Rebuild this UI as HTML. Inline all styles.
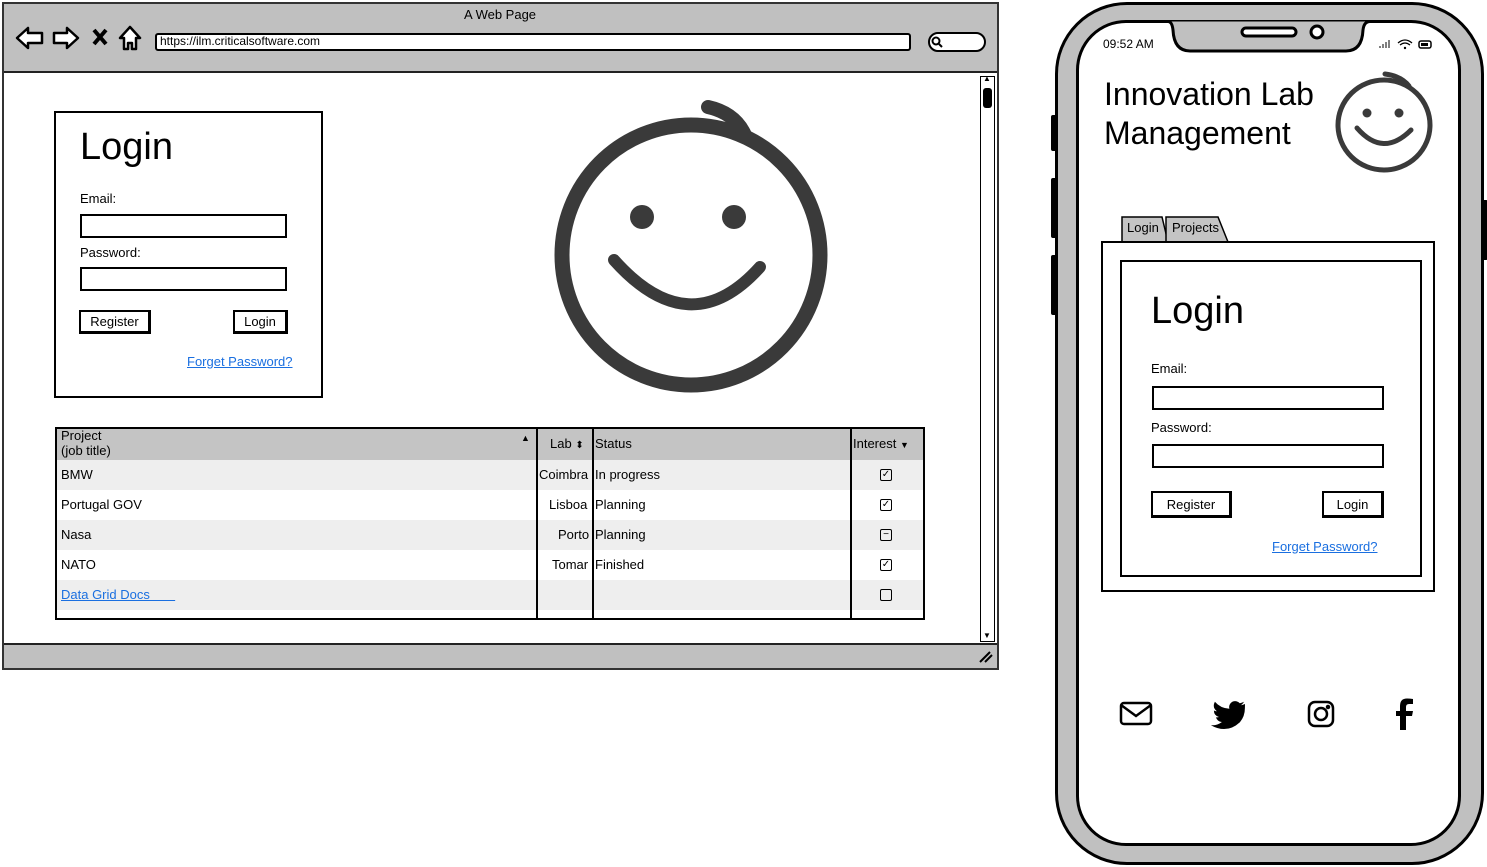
<!DOCTYPE html>
<html><head><meta charset="utf-8"><style>
*{margin:0;padding:0;box-sizing:border-box}
body{width:1487px;height:867px;background:#fff;font-family:"Liberation Sans",sans-serif;color:#000;position:relative;overflow:hidden}
.a{position:absolute}
.inp{position:absolute;border:2px solid #000;background:#fff}
.btn{position:absolute;border:2px solid #000;border-right-width:3px;border-bottom-width:3px;background:#fff;font-size:13px;text-align:center;line-height:20px}
.lnk{position:absolute;color:#1a6fe0;text-decoration:underline;font-size:13px}
.t{position:absolute;font-size:13px}
.cb{position:absolute;width:12px;height:12px;border:1.5px solid #000;border-radius:2px;font-size:10px;line-height:9px;text-align:center}
</style></head><body>
<!-- browser -->
<div class="a" style="left:2px;top:2px;width:997px;height:668px;border:2px solid #333;background:#fff"></div>
<div class="a" style="left:4px;top:4px;width:993px;height:69px;background:#c0c0c0;border-bottom:2px solid #222"></div>
<div class="t" style="left:464px;top:7px">A Web Page</div>
<svg class="a" style="left:14px;top:24px" width="130" height="28" viewBox="0 0 130 28" fill="#fff" stroke="#000" stroke-width="2.5" stroke-linejoin="round">
<path d="M3 14 L14 4 L14 9 L28 9 L28 19 L14 19 L14 24 Z"/>
<path d="M64 14 L53 4 L53 9 L40 9 L40 19 L53 19 L53 24 Z"/>
<path d="M80 6 L92 20 M92 6 L80 20" stroke-width="4"/>
<path d="M106 14 L116 3 L126 14 L122 14 L122 25 L118 25 L118 19 L114 19 L114 25 L110 25 L110 14 Z"/>
</svg>
<div class="a" style="left:155px;top:33px;width:756px;height:18px;border:2px solid #000;border-radius:3px;background:#fff"></div>
<div class="t" style="left:160px;top:34px;font-size:12px">https://ilm.criticalsoftware.com</div>
<div class="a" style="left:928px;top:32px;width:58px;height:20px;border:2px solid #000;border-radius:10px;background:#fff"></div>
<svg class="a" style="left:931px;top:36px" width="14" height="12"><circle cx="5" cy="5" r="3.5" fill="none" stroke="#000" stroke-width="2"/><path d="M8 8 L11 11" stroke="#000" stroke-width="2"/></svg>
<div class="a" style="left:4px;top:643px;width:993px;height:25px;background:#c0c0c0;border-top:2px solid #222"></div>
<div class="a" style="left:980px;top:76px;width:15px;height:566px;border:1.5px solid #000;background:#fff"></div>
<div class="a" style="left:983px;top:88px;width:9px;height:20px;background:#000;border-radius:3px"></div>
<div class="t" style="left:983px;top:74px;font-size:8px">▲</div>
<div class="t" style="left:983px;top:631px;font-size:8px">▼</div>
<svg class="a" style="left:978px;top:650px" width="16" height="14"><path d="M2 12 L12 2 M7 12 L14 5" stroke="#000" stroke-width="2"/></svg>
<!-- login card -->
<div class="a" style="left:54px;top:111px;width:269px;height:287px;border:2px solid #000"></div>
<div class="t" style="left:80px;top:126px;font-size:38px">Login</div>
<div class="t" style="left:80px;top:191px">Email:</div>
<div class="inp" style="left:80px;top:214px;width:207px;height:24px"></div>
<div class="t" style="left:80px;top:245px">Password:</div>
<div class="inp" style="left:80px;top:267px;width:207px;height:24px"></div>
<div class="btn" style="left:79px;top:310px;width:72px;height:24px">Register</div>
<div class="btn" style="left:233px;top:310px;width:55px;height:24px">Login</div>
<div class="lnk" style="left:187px;top:354px">Forget Password?</div>
<!-- big smiley -->
<svg class="a" style="left:550px;top:95px" width="285" height="300" viewBox="0 0 285 300" fill="none" stroke="#3a3a3a" stroke-linecap="round">
<ellipse cx="141" cy="160" rx="129" ry="130" stroke-width="15"/>
<path d="M158 12 Q185 18 195 40" stroke-width="14"/>
<circle cx="92" cy="122" r="12" fill="#3a3a3a" stroke="none"/>
<circle cx="184" cy="122" r="12" fill="#3a3a3a" stroke="none"/>
<path d="M64 165 Q140 250 210 172" stroke-width="12"/>
</svg>
<!-- table -->
<div class="a" style="left:55px;top:427px;width:870px;height:193px;border:2px solid #000;background:#fff"></div>
<div class="a" style="left:57px;top:429px;width:866px;height:31px;background:#c4c4c4"></div>
<div class="a" style="left:57px;top:460px;width:866px;height:30px;background:#eee"></div>
<div class="a" style="left:57px;top:520px;width:866px;height:30px;background:#eee"></div>
<div class="a" style="left:57px;top:580px;width:866px;height:30px;background:#eee"></div>
<div class="a" style="left:536px;top:429px;width:2px;height:190px;background:#000"></div>
<div class="a" style="left:592px;top:429px;width:2px;height:190px;background:#000"></div>
<div class="a" style="left:850px;top:429px;width:2px;height:190px;background:#000"></div>
<div class="t" style="left:61px;top:428px;line-height:15px">Project<br>(job title)</div>
<div class="t" style="left:521px;top:433px;font-size:9px">▲</div>
<div class="t" style="left:550px;top:436px">Lab <span style="font-size:10px">⬍</span></div>
<div class="t" style="left:595px;top:436px">Status</div>
<div class="t" style="left:853px;top:436px">Interest <span style="font-size:9px">▼</span></div>
<div class="t" style="left:61px;top:467px">BMW</div><div class="t" style="left:539px;top:467px">Coimbra</div><div class="t" style="left:595px;top:467px">In progress</div>
<div class="t" style="left:61px;top:497px">Portugal GOV</div><div class="t" style="left:549px;top:497px">Lisboa</div><div class="t" style="left:595px;top:497px">Planning</div>
<div class="t" style="left:61px;top:527px">Nasa</div><div class="t" style="left:558px;top:527px">Porto</div><div class="t" style="left:595px;top:527px">Planning</div>
<div class="t" style="left:61px;top:557px">NATO</div><div class="t" style="left:552px;top:557px">Tomar</div><div class="t" style="left:595px;top:557px">Finished</div>
<div class="lnk" style="left:61px;top:587px">Data Grid Docs&nbsp;&nbsp;&nbsp;&nbsp;&nbsp;&nbsp;&nbsp;</div>
<div class="cb" style="left:880px;top:469px">✓</div>
<div class="cb" style="left:880px;top:499px">✓</div>
<div class="cb" style="left:880px;top:529px">−</div>
<div class="cb" style="left:880px;top:559px">✓</div>
<div class="cb" style="left:880px;top:589px"></div>
<!-- phone -->
<div class="a" style="left:1055px;top:2px;width:429px;height:863px;border:3px solid #000;border-radius:72px;background:#c0c0c0"></div>
<div class="a" style="left:1051px;top:115px;width:6px;height:36px;background:#000;border-radius:2px"></div>
<div class="a" style="left:1051px;top:178px;width:6px;height:60px;background:#000;border-radius:2px"></div>
<div class="a" style="left:1051px;top:255px;width:6px;height:60px;background:#000;border-radius:2px"></div>
<div class="a" style="left:1482px;top:200px;width:6px;height:60px;background:#000;border-radius:2px"></div>
<div class="a" style="left:1076px;top:20px;width:385px;height:826px;border:3px solid #000;border-radius:50px;background:#fff"></div>
<svg class="a" style="left:1160px;top:18px" width="216" height="38"><path d="M0 3.5 L8 3.5 Q12 3.5 13 12 Q14 33 30 33 L186 33 Q202 33 203 12 Q204 3.5 210 3.5 L216 3.5" fill="#c0c0c0" stroke="#000" stroke-width="3"/>
<rect x="82" y="10" width="54" height="8" rx="4" fill="#fff" stroke="#000" stroke-width="3"/><circle cx="157" cy="14" r="6" fill="#fff" stroke="#000" stroke-width="3"/></svg>
<div class="t" style="left:1103px;top:37px;font-size:12px">09:52 AM</div>
<svg class="a" style="left:1378px;top:37px" width="58" height="14"><path d="M2 11v-2M5 11v-4M8 11v-6M11 11v-8" stroke="#000"/><path d="M20 6 Q27 0 34 6 M22 8 Q27 4 32 8" stroke="#000" fill="none" stroke-width="1.3"/><circle cx="27" cy="11" r="1.2"/><rect x="41" y="4" width="12" height="7" rx="2" fill="none" stroke="#000" stroke-width="1.5"/><rect x="43" y="6" width="7" height="3"/></svg>
<div class="t" style="left:1104px;top:75px;font-size:32px;line-height:39px">Innovation Lab<br>Management</div>
<svg class="a" style="left:1333px;top:68px" width="104" height="106" viewBox="0 0 104 106" fill="none" stroke="#3a3a3a" stroke-linecap="round">
<ellipse cx="51" cy="57" rx="46" ry="45" stroke-width="5"/>
<path d="M52 6 Q68 8 76 18" stroke-width="5"/>
<circle cx="34" cy="45" r="4.5" fill="#3a3a3a" stroke="none"/><circle cx="66" cy="45" r="4.5" fill="#3a3a3a" stroke="none"/>
<path d="M24 60 Q50 90 78 62" stroke-width="5"/></svg>
<svg class="a" style="left:1120px;top:214px" width="115" height="30"><path d="M2 28 L2 3 L42 3 L48 28" fill="#c4c4c4" stroke="#000" stroke-width="1.5"/><path d="M46 28 L46 3 L98 3 L108 28" fill="#c4c4c4" stroke="#000" stroke-width="1.5"/></svg>
<div class="t" style="left:1127px;top:220px">Login</div>
<div class="t" style="left:1172px;top:220px">Projects</div>
<div class="a" style="left:1101px;top:241px;width:334px;height:351px;border:2px solid #000"></div>
<div class="a" style="left:1120px;top:260px;width:302px;height:317px;border:2px solid #000"></div>
<div class="t" style="left:1151px;top:290px;font-size:38px">Login</div>
<div class="t" style="left:1151px;top:361px">Email:</div>
<div class="inp" style="left:1152px;top:386px;width:232px;height:24px"></div>
<div class="t" style="left:1151px;top:420px">Password:</div>
<div class="inp" style="left:1152px;top:444px;width:232px;height:24px"></div>
<div class="btn" style="left:1151px;top:491px;width:81px;height:27px;line-height:23px">Register</div>
<div class="btn" style="left:1322px;top:491px;width:62px;height:27px;line-height:23px">Login</div>
<div class="lnk" style="left:1272px;top:539px">Forget Password?</div>
<svg class="a" style="left:1118px;top:696px" width="310" height="36" fill="none" stroke="#000" stroke-width="2.5">
<rect x="3" y="7" width="30" height="21" rx="3"/><path d="M3 9 L18 20 L33 9"/>
<path fill="#000" stroke="none" d="M127 8 q-2 1-4 1.2 q2-1.5 3-3.5 q-2 1-4.2 1.6 a6 6 0 0 0-10.4 5.5 q-9-.5-14.5-7 q-3 5.5 2 9.5 q-1.6 0-3-.8 q0 5 5 6.5 q-1.5.5-3 .2 q1.5 4.5 6 4.8 q-5 3.8-11 3.2 q16 9 29-3 q5-6 5-14 z"/>
<rect x="191" y="6" width="24" height="24" rx="6"/><circle cx="203" cy="18" r="6"/><circle cx="210" cy="11" r="1" fill="#000"/>
<path fill="#000" stroke="none" d="M288 34 V20 H294 L295 15 H288 V11 Q288 8 291 8 H295 V3 Q292 2.5 289 2.5 Q282 2.5 282 10 V15 H278 V20 H282 V34 Z"/>
</svg>
</body></html>
